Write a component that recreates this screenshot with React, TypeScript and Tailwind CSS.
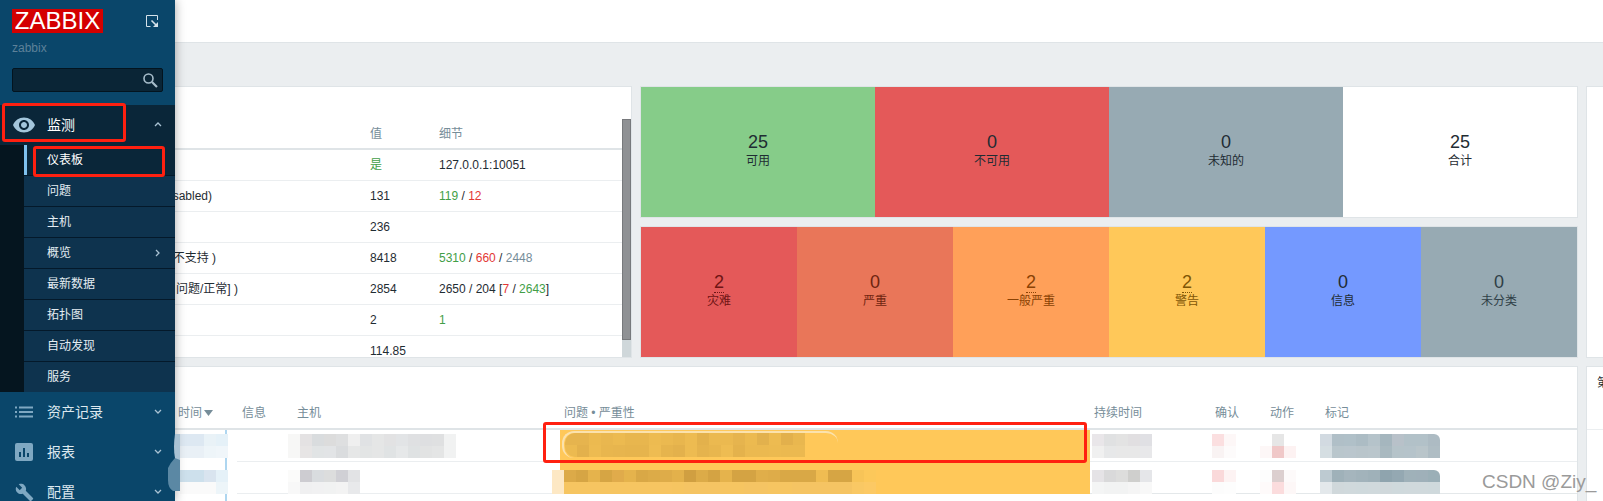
import type { ReactNode } from "react";

const subItems = ["问题", "主机", "概览", "最新数据", "拓扑图", "自动发现", "服务"];

// labels run under the sidebar, only their tail shows
const statRows = [
  { label: "sabled)", width: "w-[37px]", value: "131", detail: <><G>119</G> / <R>12</R></> },
  { label: "", width: "w-0", value: "236", detail: null },
  { label: "不支持 )", width: "w-[41px]", value: "8418", detail: <><G>5310</G> / <R>660</R> / <span className="text-[#768d99]">2448</span></> },
  { label: "问题/正常] )", width: "w-[63px]", value: "2854", detail: <>2650 / 204 [<R>7</R> / <G>2643</G>]</> },
  { label: "", width: "w-0", value: "2", detail: <G>1</G> },
  { label: "", width: "w-0", value: "114.85", detail: null },
];

const hostTiles = [
  { n: "25", label: "可用", cls: "bg-[#86cc89]" },
  { n: "0", label: "不可用", cls: "bg-[#e45959]" },
  { n: "0", label: "未知的", cls: "bg-[#97aab3]" },
  { n: "25", label: "合计", cls: "bg-white" },
];

const severityTiles = [
  { n: "2", label: "灾难", cls: "bg-[#e45959] text-[#6e1414]", dotted: true },
  { n: "0", label: "严重", cls: "bg-[#e97659] text-[#6e2410]", dotted: false },
  { n: "2", label: "一般严重", cls: "bg-[#ffa059] text-[#8a4204]", dotted: true },
  { n: "2", label: "警告", cls: "bg-[#ffc859] text-[#7f5606]", dotted: true },
  { n: "0", label: "信息", cls: "bg-[#7499ff] text-[#0f3fa8]", dotted: false },
  { n: "0", label: "未分类", cls: "bg-[#97aab3] text-[#2f3f47]", dotted: false },
];

// blurred cells from the screenshot, one class per 12px block
const timeA = [
  ["bg-[#dde8f2]", "bg-[#dde8f2]", "bg-[#e9f2f7]", "bg-[#e5f1f8]"],
  ["bg-[#e9f0f6]", "bg-[#e9f0f6]", "bg-[#eef5f9]", "bg-[#f0f6fa]"],
];
const timeB = [
  ["bg-[#cde0ec]", "bg-[#cde0ec]", "bg-[#d9e4ef]", "bg-[#e5f1f8]"],
  ["bg-[#fafafa]", "bg-[#fafafa]", "bg-[#fafafa]", "bg-[#edf5f9]"],
];
const hostA = [
  ["bg-[#f7f7f6]", "bg-[#e4e2e3]", "bg-[#d9dcde]", "bg-[#dcdcdc]", "bg-[#dedfe0]", "bg-[#efefef]", "bg-[#e0e2e4]", "bg-[#e5e6e6]", "bg-[#e2e2e3]", "bg-[#e2e4e6]", "bg-[#dfe0e2]", "bg-[#dedfe1]", "bg-[#dfe0e1]", "bg-[#f1f2f2]"],
  ["bg-[#f7f7f6]", "bg-[#e7e5e5]", "bg-[#e1e4e5]", "bg-[#e2e4e6]", "bg-[#dadcde]", "bg-[#e6e7e7]", "bg-[#e3e5e5]", "bg-[#e5e6e6]", "bg-[#e0e3e4]", "bg-[#e6e8e9]", "bg-[#dfe2e3]", "bg-[#e2e3e3]", "bg-[#e4e5e5]", "bg-[#f1f2f2]"],
];
const hostB = [
  ["bg-[#fbfbfa]", "bg-[#cdccd1]", "bg-[#d9dcdf]", "bg-[#dcdddd]", "bg-[#d0d0d5]", "bg-[#e2e3e5]"],
  ["bg-[#f8f8f8]", "bg-[#f0f0f1]", "bg-[#f1f1f2]", "bg-[#f1f2f2]", "bg-[#f3f3f3]", "bg-[#e8e9eb]"],
];
const problemA = [
  ["bg-[#e6b44e]", "bg-[#e6b44e]", "bg-[#ecba50]", "bg-[#e9b74f]", "bg-[#ecba50]", "bg-[#e8b64e]", "bg-[#e8b64e]", "bg-[#edbb51]", "bg-[#ebb950]", "bg-[#e8b64e]", "bg-[#edbb51]", "bg-[#e3b14c]", "bg-[#ebb950]", "bg-[#ebb950]", "bg-[#e6b44e]", "bg-[#ecba50]", "bg-[#e2b14d]", "bg-[#edbb51]", "bg-[#e2b04c]", "bg-[#e9b74f]"],
  ["bg-[#ecba50]", "bg-[#e3b14c]", "bg-[#edbb51]", "bg-[#e8b64e]", "bg-[#e7b54e]", "bg-[#e6b44d]", "bg-[#e6b44d]", "bg-[#eebc52]", "bg-[#e6b44d]", "bg-[#e3b14c]", "bg-[#edbb51]", "bg-[#e5b34d]", "bg-[#e8b64e]", "bg-[#eebc52]", "bg-[#e4b24c]", "bg-[#ebb950]", "bg-[#ebb950]", "bg-[#ecba50]", "bg-[#ebb950]", "bg-[#ebb950]"],
];
const problemB = [
  ["bg-[#fde8c4]", "bg-[#dcaa48]", "bg-[#d6a544]", "bg-[#e5b34c]", "bg-[#d6a544]", "bg-[#e0ab4b]", "bg-[#e5b34c]", "bg-[#d9a846]", "bg-[#dcab48]", "bg-[#deac49]", "bg-[#e3b14b]", "bg-[#d09f41]", "bg-[#dcab48]", "bg-[#d4a343]", "bg-[#e5b34c]", "bg-[#d4a343]", "bg-[#d4a343]", "bg-[#e0ae4a]", "bg-[#deac49]", "bg-[#d9a846]", "bg-[#d9a846]", "bg-[#d9a846]", "bg-[#efbc52]", "bg-[#d6a544]", "bg-[#d6a544]", "bg-[#f7c458]", "bg-[#fcc85a]"],
  ["bg-[#fde8c4]", "bg-[#f6c561]", "bg-[#f6c561]", "bg-[#f6c561]", "bg-[#f6c561]", "bg-[#f6c561]", "bg-[#f6c561]", "bg-[#f6c561]", "bg-[#f6c561]", "bg-[#f7c562]", "bg-[#f6c561]", "bg-[#f5c463]", "bg-[#f5c463]", "bg-[#f5c463]", "bg-[#f6c561]", "bg-[#f6c561]", "bg-[#f5c463]", "bg-[#f5c463]", "bg-[#f6c561]", "bg-[#f6c561]", "bg-[#f5c463]", "bg-[#f5c463]", "bg-[#f5c463]", "bg-[#f5c463]", "bg-[#f5c463]", "bg-[#f9c864]", "bg-[#fcc964]"],
];
const durationA = [
  ["bg-[#e9e6e9]", "bg-[#e0e1e2]", "bg-[#e3e3e3]", "bg-[#e1dfe1]", "bg-[#e0e0e4]"],
  ["bg-[#f0f0f0]", "bg-[#e7e8e9]", "bg-[#e8e8e8]", "bg-[#e8e8e8]", "bg-[#e8e8ea]"],
];
const durationB = [
  ["bg-[#e5e3e6]", "bg-[#d9d9da]", "bg-[#dddddc]", "bg-[#cfcfcd]", "bg-[#e5e6e9]"],
  ["bg-[#f4f5f5]", "bg-[#f2f3f3]", "bg-[#f2f3f3]", "bg-[#f5f5f5]", "bg-[#f8f8f8]"],
];
const ackA = [
  ["bg-[#fbdfe0]", "bg-[#fdf7f7]"],
  ["bg-[#f9f3f3]", "bg-[#fdfbfb]"],
];
const ackB = [
  ["bg-[#fad9da]", "bg-[#fdf3f3]"],
  ["bg-[#fcfcfc]", "bg-[#fdfdfd]"],
];
const actionA = [
  ["bg-white", "bg-[#e6e6e6]", "bg-white"],
  ["bg-[#fdf7f7]", "bg-[#f0c8c8]", "bg-[#fdf2f2]"],
];
const actionB = [
  ["bg-[#fdfdfd]", "bg-[#dccfcf]", "bg-[#fdfafa]"],
  ["bg-[#fefafa]", "bg-[#fbdcdd]", "bg-[#fdf7f7]"],
];
const tagA = [
  ["bg-[#d2dae1]", "bg-[#b0bfc7]", "bg-[#b0c0c8]", "bg-[#acbcc4]", "bg-[#b5c3ca]", "bg-[#a5b6be]", "bg-[#b8c1c9]", "bg-[#b2c1c8]", "bg-[#b2c1c8]", "bg-[#adbbc3]"],
  ["bg-[#d5dee2]", "bg-[#b9c6cc]", "bg-[#bac6cd]", "bg-[#b9c5cb]", "bg-[#bac6cc]", "bg-[#a9b9c0]", "bg-[#b5c3c9]", "bg-[#b5c3ca]", "bg-[#b9c5ca]", "bg-[#afbdc4]"],
];
const tagB = [
  ["bg-[#bdcad1]", "bg-[#9fb1b9]", "bg-[#a5b5bd]", "bg-[#a2b3bb]", "bg-[#9fb1b9]", "bg-[#8fa4ae]", "bg-[#94a8b2]", "bg-[#9fb1b9]", "bg-[#9fb0b9]", "bg-[#9bafb7]"],
  ["bg-[#e3e8eb]", "bg-[#d0d8db]", "bg-[#d0d9dc]", "bg-[#cfd9dc]", "bg-[#d0d9dc]", "bg-[#d0d8db]", "bg-[#cfd9dc]", "bg-[#d0d9dc]", "bg-[#d0d9dc]", "bg-[#cfd9dc]"],
];

function G({ children }: { children: ReactNode }) {
  return <span className="text-[#429e47]">{children}</span>;
}

function R({ children }: { children: ReactNode }) {
  return <span className="text-[#e33734]">{children}</span>;
}

function Mosaic({ rows, className = "" }: { rows: string[][]; className?: string }) {
  return (
    <div className={`flex flex-col w-fit ${className}`}>
      {rows.map((row, i) => (
        <div key={i} className="flex">
          {row.map((cls, j) => (
            <div key={j} className={`w-3 h-3 ${cls}`} />
          ))}
        </div>
      ))}
    </div>
  );
}

function Chevron({ dir }: { dir: "up" | "down" | "right" }) {
  const points = dir === "up" ? "1,5 4,2 7,5" : dir === "down" ? "1,2 4,5 7,2" : "2,1 5,4 2,7";
  return (
    <svg width="8" height="8" viewBox="0 0 8 8" fill="none" stroke="#a9c2d3" strokeWidth="1.3">
      <polyline points={points} />
    </svg>
  );
}

function EyeIcon() {
  return (
    <svg width="24" height="24" viewBox="0 0 24 24" fill="#a3c6dc">
      <path d="M12 4.5C7 4.5 2.73 7.61 1 12c1.73 4.39 6 7.5 11 7.5s9.27-3.11 11-7.5c-1.73-4.39-6-7.5-11-7.5zM12 17c-2.76 0-5-2.24-5-5s2.24-5 5-5 5 2.24 5 5-2.24 5-5 5zm0-8c-1.66 0-3 1.34-3 3s1.34 3 3 3 3-1.34 3-3-1.34-3-3-3z" />
    </svg>
  );
}

function ListIcon() {
  return (
    <svg width="18" height="12" viewBox="0 0 18 12" fill="#7fa8c2">
      <rect x="0" y="0.5" width="2" height="2" />
      <rect x="0" y="5" width="2" height="2" />
      <rect x="0" y="9.5" width="2" height="2" />
      <rect x="4" y="0.5" width="14" height="2" />
      <rect x="4" y="5" width="14" height="2" />
      <rect x="4" y="9.5" width="14" height="2" />
    </svg>
  );
}

function ChartIcon() {
  return (
    <svg width="18" height="18" viewBox="0 0 18 18">
      <rect width="18" height="18" rx="2" fill="#7fa8c2" />
      <rect x="4" y="9" width="2" height="5" fill="#0a466a" />
      <rect x="8" y="5" width="2" height="9" fill="#0a466a" />
      <rect x="12" y="10" width="2" height="4" fill="#0a466a" />
    </svg>
  );
}

function WrenchIcon() {
  return (
    <svg width="19" height="19" viewBox="0 0 24 24" fill="#7fa8c2">
      <path d="M22.7 19l-9.1-9.1c.9-2.3.4-5-1.5-6.9-2-2-5-2.4-7.4-1.3L9 6 6 9 1.6 4.7C.4 7.1.9 10.1 2.9 12.1c1.9 1.9 4.6 2.4 6.9 1.5l9.1 9.1c.4.4 1 .4 1.4 0l2.3-2.3c.5-.4.5-1.1.1-1.4z" />
    </svg>
  );
}

function Sidebar() {
  return (
    <aside className="relative z-10 w-[175px] h-[501px] shrink-0 overflow-hidden bg-[#0a466a] shadow-[0_0_10px_rgba(0,0,0,0.35)]">
      <div className="h-[105px] pl-3 pt-[9px]">
        <div className="flex items-start">
          <div className="w-[91px] h-6 bg-[#d40000] text-white text-[24px] leading-6 text-center">ZABBIX</div>
          <svg className="ml-[42px] mt-[5px]" width="14" height="14" viewBox="0 0 14 14" fill="none" stroke="#d5e2ea" strokeWidth="1">
            <path d="M5.5 12.5H1.5V1.5H12.5V6" />
            <path d="M6.5 6.5L11 11" strokeWidth="1.6" />
            <path d="M13 8V13H8Z" fill="#d5e2ea" stroke="none" />
          </svg>
        </div>
        <div className="mt-[7px] text-xs leading-4 text-[#5d8199]">zabbix</div>
        <div className="mt-[12px] w-[151px] h-6 flex items-center justify-end pr-[4px] rounded-[2px] border border-[#03141f] bg-[#0a2536]">
          <svg width="16" height="16" viewBox="0 0 16 16" fill="none" stroke="#a7bdcb">
            <circle cx="6.5" cy="6.5" r="4.5" strokeWidth="1.6" />
            <path d="M10 10L15 15" strokeWidth="2.2" />
          </svg>
        </div>
      </div>

      <div className="h-10 flex items-center pl-3 pr-[13px] bg-[#0a2639] text-white text-sm">
        <EyeIcon />
        <span className="ml-[11px] flex-1">监测</span>
        <Chevron dir="up" />
      </div>
      <div className="bg-[#05151f] pl-6">
        <div className="h-[30px] flex items-center pl-[20px] border-l-[3px] border-[#7fc1ee] bg-[#0a2639] text-white text-xs">仪表板</div>
        {subItems.map((item) => (
          <div key={item} className="h-[31px] flex items-center pl-[23px] pr-[13px] border-t border-[#04192a] bg-[#0e334e] text-[#e4edf2] text-xs">
            <span className="flex-1">{item}</span>
            {item === "概览" && <Chevron dir="right" />}
          </div>
        ))}
      </div>

      {[
        { label: "资产记录", icon: <ListIcon /> },
        { label: "报表", icon: <ChartIcon /> },
        { label: "配置", icon: <WrenchIcon /> },
      ].map((item) => (
        <div key={item.label} className="h-10 flex items-center pr-[13px] text-[#dce8ef] text-sm">
          <div className="w-[47px] pl-[15px] flex items-center">{item.icon}</div>
          <span className="flex-1">{item.label}</span>
          <Chevron dir="down" />
        </div>
      ))}
    </aside>
  );
}

function StatusCard() {
  return (
    <div className="flex overflow-hidden bg-white border-y border-r border-[#dfe4e7] text-xs text-[#1f2c33]">
      <div className="flex-1">
        <div className="h-[63px] flex items-end pb-[6px] border-b-2 border-[#dfe4e7] text-[#768d99]">
          <div className="w-[195px]" />
          <div className="w-[69px]">值</div>
          <div>细节</div>
        </div>
        <div className="h-[31px] flex items-center border-b border-[#ebeef0]">
          <div className="w-[195px]" />
          <div className="w-[69px] text-[#429e47]">是</div>
          <div>127.0.0.1:10051</div>
        </div>
        {statRows.map((row) => (
          <div key={row.value} className="h-[31px] shrink-0 flex items-center border-b border-[#ebeef0]">
            <div className="w-[195px]">
              <div className={`${row.width} flex justify-end whitespace-nowrap`}>{row.label}</div>
            </div>
            <div className="w-[69px]">{row.value}</div>
            <div>{row.detail}</div>
          </div>
        ))}
      </div>
      <div className="w-[9px] pt-[32px] flex flex-col">
        <div className="h-[221px] bg-[#8f9194] border border-[#77797c]" />
        <div className="flex-1 bg-[#cfd7da]" />
      </div>
    </div>
  );
}

function Tile({ n, label, cls, dotted }: { n: string; label: string; cls: string; dotted?: boolean }) {
  return (
    <div className={`flex-1 flex flex-col items-center justify-center pb-[3px] text-[#1f2c33] ${cls}`}>
      <div className="text-[18px] leading-[21px]">
        <span className={dotted ? "border-b border-dotted border-current" : ""}>{n}</span>
      </div>
      <div className="text-xs leading-4">{label}</div>
    </div>
  );
}

function ProblemRow({ blocks, pt, orange, last }: { blocks: string[][][]; pt: string; orange: ReactNode; last?: boolean }) {
  const [time, host, duration, ack, action, tag] = blocks;
  return (
    <div className="h-8 flex">
      <div className={`w-[52px] shrink-0 pl-[5px] border-r-2 border-[#aed6f0] ${pt}`}>
        <Mosaic rows={time} />
      </div>
      <div className="w-[10px] shrink-0" />
      <div className={`w-[323px] shrink-0 pl-[51px] border-b border-[#ebeef0] ${pt}`}>
        <Mosaic rows={host} />
      </div>
      <div className="w-[530px] shrink-0 bg-[#ffc859]">{orange}</div>
      <div className={`flex-1 flex pl-[2px] border-b ${last ? "border-[#e4e8ea]" : "border-[#ebeef0]"} ${pt}`}>
        <div className="w-[120px]"><Mosaic rows={duration} /></div>
        <div className="w-[48px]"><Mosaic rows={ack} /></div>
        <div className="w-[60px]"><Mosaic rows={action} /></div>
        <Mosaic rows={tag} className="h-fit rounded-tr-[6px] overflow-hidden" />
      </div>
    </div>
  );
}

function ProblemsCard() {
  return (
    <div className="col-span-2 overflow-hidden bg-white border-t border-r border-[#dfe4e7] text-xs text-[#768d99] whitespace-nowrap">
      <div className="h-[63px] flex items-end pb-[7px] pl-[3px] border-b-2 border-[#dfe4e7]">
        <div className="w-[64px] flex items-center gap-[2px]">
          时间
          <svg width="9" height="6" viewBox="0 0 9 6" fill="#768d99"><path d="M0 0H9L4.5 6Z" /></svg>
        </div>
        <div className="w-[55px]">信息</div>
        <div className="w-[267px]">主机</div>
        <div className="w-[530px]">问题 • 严重性</div>
        <div className="w-[121px]">持续时间</div>
        <div className="w-[55px]">确认</div>
        <div className="w-[55px]">动作</div>
        <div>标记</div>
      </div>
      <ProblemRow
        blocks={[timeA, hostA, durationA, ackA, actionA, tagA]}
        pt="pt-[4px]"
        orange={
          <div className="ml-[2px] mt-[1px] w-[276px] h-[27px] rounded-[12px] border-t-2 border-l-2 border-[#fbe2ad]">
            <Mosaic rows={problemA} className="ml-[1px] rounded-l-[10px] overflow-hidden" />
          </div>
        }
      />
      <ProblemRow
        blocks={[timeB, hostB, durationB, ackB, actionB, tagB]}
        pt="pt-[8px]"
        last
        orange={<Mosaic rows={problemB} className="-ml-2 pt-[8px]" />}
      />
      <div className="w-[52px] h-2 border-r-2 border-[#aed6f0]" />
    </div>
  );
}

export default function App() {
  return (
    <div className="relative w-[1603px] h-[501px] overflow-hidden flex bg-[#ebeef0] font-['Liberation_Sans','Noto_Sans_CJK_SC',sans-serif]">
      <Sidebar />

      <main className="flex-1 min-w-0">
        <div className="h-[43px] bg-white border-b border-[#dfe4e7]" />
        <div className="mt-[43px] grid grid-cols-[457px_938px_1fr] grid-rows-[272px_135px] gap-2">
          <StatusCard />
          <div className="flex flex-col gap-2">
            <div className="h-[132px] flex border border-[#dfe4e7]">
              {hostTiles.map((t) => (
                <Tile key={t.label} {...t} />
              ))}
            </div>
            <div className="h-[132px] flex border border-[#dfe4e7]">
              {severityTiles.map((t) => (
                <Tile key={t.label} {...t} />
              ))}
            </div>
          </div>
          <div className="bg-white border border-r-0 border-[#dfe4e7]" />
          <ProblemsCard />
          <div className="bg-white border-t border-l border-[#dfe4e7] text-xs text-[#1f2c33]">
            <div className="h-[63px] pt-2 pl-[10px] border-b border-[#ebeef0] overflow-hidden">第</div>
          </div>
        </div>
      </main>

      {/* hand-drawn annotations and other marks sitting on top of the screenshot */}
      <div className="absolute z-20 left-[2px] top-[103px] w-[124px] h-[39px] rounded-[3px] border-[3px] border-[#ff2010]" />
      <div className="absolute z-20 left-[33px] top-[146px] w-[132px] h-[31px] rounded-[3px] border-[3px] border-[#ff2010]" />
      <div className="absolute z-20 left-[543px] top-[422px] w-[544px] h-[41px] rounded-[3px] border-[3px] border-[#ff2010]" />
      <svg className="absolute z-20 left-[165px] top-[430px]" width="20" height="65" viewBox="0 0 20 65">
        <path d="M15 4L15 32L10 28Q8 18 10 4Z" fill="#a9c2d4" />
        <path d="M15 30L15 61L8 61Q3 58 3 50L3 38Q6 32 10 28Z" fill="#5b88a4" />
      </svg>
      <div className="absolute z-20 left-[1482px] top-[470px] whitespace-nowrap text-[19px] leading-6 text-[#9a9a9a]">CSDN @Ziy_</div>
    </div>
  );
}
